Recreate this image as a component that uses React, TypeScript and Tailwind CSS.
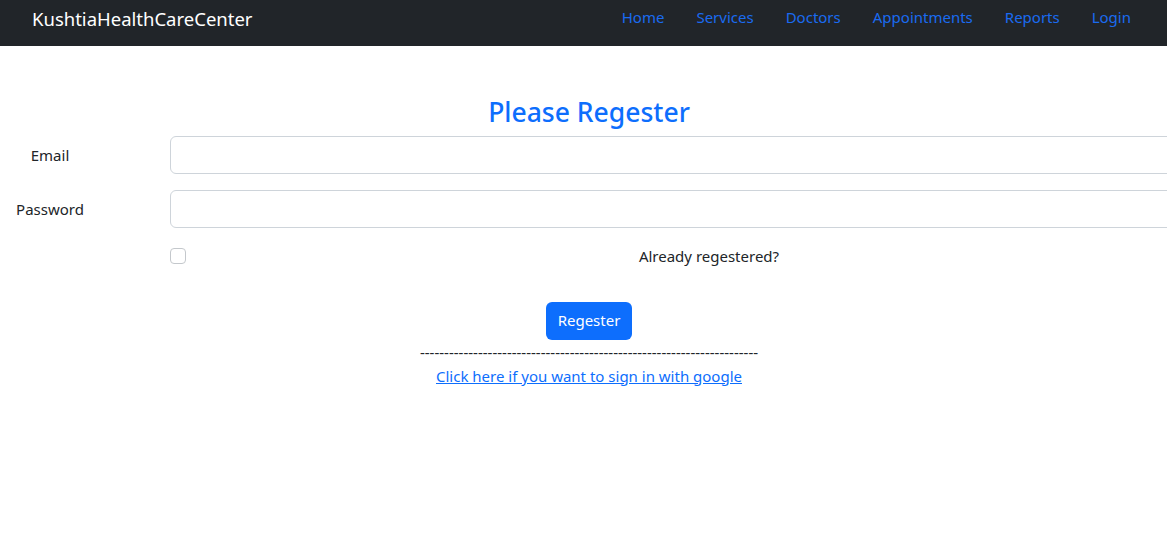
import React from "react";

export default function App() {
  const links = ["Home", "Services", "Doctors", "Appointments", "Reports", "Login"];
  return (
    <div className="w-[1167px] h-[542px] overflow-hidden bg-white text-[#212529]" style={{ fontFamily: '"Noto Sans", "Open Sans", sans-serif' }}>
      <nav className="h-[46px] bg-[#212529] flex items-start justify-between pl-[32px] pr-[20px] pt-[9px]">
        <span className="text-white text-[18.5px] leading-[19px]">KushtiaHealthCareCenter</span>
        <div className="flex items-center -mt-[1px]">
          {links.map((l) => (
            <a key={l} href="#" className="px-[16px] text-[#1a6bf0] text-[15px] leading-[18px]">
              {l}
            </a>
          ))}
        </div>
      </nav>
      <div className="w-[1178px]">
        <h3 className="text-center text-[#0d6efd] text-[26.5px] font-medium leading-none mt-[53px] mb-[10px]">Please Regester</h3>
        <div className="flex items-center h-[38px]">
          <label className="w-[100px] shrink-0 text-center text-[15px] pt-[2px]">Email</label>
          <div className="w-[70px] shrink-0" />
          <input className="w-[1010px] shrink-0 h-[38px] border border-[#ced4da] rounded-[6px]" />
        </div>
        <div className="flex items-center h-[38px] mt-[16px]">
          <label className="w-[100px] shrink-0 text-center text-[15px] pt-[2px]">Password</label>
          <div className="w-[70px] shrink-0" />
          <input type="password" className="w-[1010px] shrink-0 h-[38px] border border-[#ced4da] rounded-[6px]" />
        </div>
        <div className="flex items-center h-[16px] mt-[20px]">
          <div className="w-[170px] shrink-0" />
          <input type="checkbox" className="appearance-none shrink-0 w-[16px] h-[16px] border border-[#c4c8cc] rounded-[4px] bg-white" />
          <label className="w-[1046px] shrink-0 text-center text-[15px] pt-[2px]">Already regestered?</label>
        </div>
        <div className="flex justify-center mt-[38px]">
          <button className="h-[38px] px-[12px] bg-[#0d6efd] text-white text-[15px] rounded-[6px]">Regester</button>
        </div>
        <p className="text-center text-[15px] leading-[24px] mt-[0px] whitespace-nowrap">----------------------------------------------------------------------</p>
        <p className="text-center leading-[24px] mt-[0px]">
          <a href="#" className="text-[#0d6efd] underline text-[15px]">Click here if you want to sign in with google</a>
        </p>
      </div>
    </div>
  );
}
